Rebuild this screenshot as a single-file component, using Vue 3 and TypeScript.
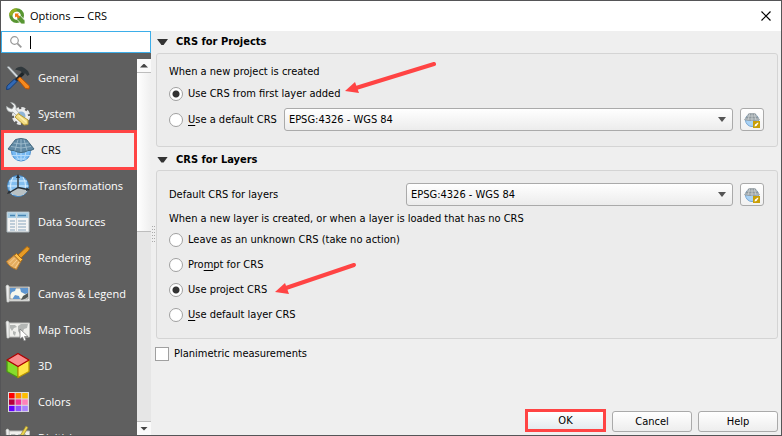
<script setup lang="ts">
import { ref } from 'vue'

interface Section {
  id: string
  label: string
}

interface Choice {
  value: string
  before: string
  key: string
  after: string
}

const sections: Section[] = [
  { id: 'general', label: 'General' },
  { id: 'system', label: 'System' },
  { id: 'crs', label: 'CRS' },
  { id: 'transformations', label: 'Transformations' },
  { id: 'sources', label: 'Data Sources' },
  { id: 'rendering', label: 'Rendering' },
  { id: 'canvas', label: 'Canvas & Legend' },
  { id: 'maptools', label: 'Map Tools' },
  { id: '3d', label: '3D' },
  { id: 'colors', label: 'Colors' },
  { id: 'digitizing', label: 'Digitizing' },
]

const layerChoices: Choice[] = [
  { value: 'unknown', before: 'Leave as an unknown CRS (take no action)', key: '', after: '' },
  { value: 'prompt', before: 'Pro', key: 'm', after: 'pt for CRS' },
  { value: 'project', before: 'Use project CRS', key: '', after: '' },
  { value: 'default', before: '', key: 'U', after: 'se default layer CRS' },
]

const swatches: string[] = [
  '#ff0000', '#ff8c00', '#ffbe00',
  '#b4003c', '#f03296', '#ff82b9',
  '#6400ff', '#8c50ff', '#aa82ff',
]

const active = ref('crs')
const search = ref('')
const projectChoice = ref('first')
const layerChoice = ref('project')
const planimetric = ref(false)
const projectCrs = ref('EPSG:4326 - WGS 84')
const layerCrs = ref('EPSG:4326 - WGS 84')
</script>

<template>
  <div class="window">
    <header class="titlebar">
      <svg class="logo" viewBox="0 0 16 16" aria-hidden="true">
        <circle cx="7.6" cy="7.6" r="5.8" fill="none" stroke="#589632" stroke-width="3.2" />
        <path d="M7.6 1.8A5.8 5.8 0 0 0 1.8 7.6" fill="none" stroke="#93b023" stroke-width="3.2" />
        <path d="M8 7.6h3.4L16 12.6V16h-3.6L8 11.400z" fill="#589632" stroke="#fff" stroke-width=".8" />
        <path d="M6 5.400h4L9 6.800l2 2.200-1.600 1.600L7.200 8.400 6 9.600z" fill="#ee7913" />
      </svg>
      <h1>Options — CRS</h1>
      <button class="close" type="button" aria-label="Close">
        <svg viewBox="0 0 10 10"><path d="M.5.5l9 9M9.500.5l-9 9" stroke="#000" stroke-width="1.200" /></svg>
      </button>
    </header>

    <div class="body">
      <aside class="sidebar">
        <label class="search">
          <svg viewBox="0 0 12 12" aria-hidden="true">
            <circle cx="4.500" cy="4.500" r="3.800" fill="none" stroke="#999" stroke-width="1.200" />
            <path d="M7.300 7.300l4 4" stroke="#999" stroke-width="1.800" />
          </svg>
          <span class="caret"></span>
          <input v-model="search" type="text" aria-label="Search options" />
        </label>
        <div class="listwrap">
          <nav class="list">
            <button
              v-for="s in sections"
              :key="s.id"
              type="button"
              class="item"
              :class="{ active: active === s.id }"
              @click="active = s.id"
            >
              <svg class="icon" viewBox="0 0 24 24" aria-hidden="true">
                <g v-if="s.id === 'general'">
                  <path d="M1 1l2-.5L13 11l-1.500 1.500z" fill="#d8dde0" stroke="#8d979c" stroke-width=".6" />
                  <path d="M9 3.500C12 0 16 0 19 2.500l3 2.500 1.500 3.500-2 1.500-2-2.500-2 .5-3-3z" fill="#30383c" />
                  <path d="M16 6l2.500 2.500L9 17l-2-2z" fill="#1d2529" />
                  <path d="M8.500 13l2.500 2.500L3.500 23 .5 23.500 1 20z" fill="#3269b5" stroke="#143d77" />
                  <path d="M14 11l9.500 9-.5 3-3.500-.5L11.500 13z" fill="#f58a1f" stroke="#bb5100" />
                </g>
                <g v-else-if="s.id === 'system'">
                  <circle cx="15" cy="14" r="7.600" fill="none" stroke="#e5e7e7" stroke-width="3" stroke-dasharray="3.800 2.180" />
                  <circle cx="15" cy="14" r="5.800" fill="#8eb4d6" stroke="#eee" stroke-width="2.600" />
                  <path d="M4.500.5L8 4 6 7 2 5.500.5 4C0 8 3 11 7 10l4 4 2.500-2.500L10 7.500C11 3 8 .5 4.500.5z" fill="#f0f2f2" stroke="#939999" stroke-width=".7" />
                  <path d="M12 11.500l10 6.500v4.500l-4 .5-9-8z" fill="#f1dc83" stroke="#b89b36" />
                  <path d="M12.500 13.500l8 7" stroke="#fff0a8" stroke-width="1.500" />
                </g>
                <g v-else-if="s.id === 'crs'">
                  <circle cx="12" cy="13.500" r="9.500" fill="#77b9f2" stroke="#4a8fd0" />
                  <path d="M3 17.500h18M6.500 21h11M12 12v11M7 12q0 7 3 10M17 12q0 7-3 10" fill="none" stroke="#b5dbfb" />
                  <path d="M6.500 1.500Q12-.5 17.500 1.500L25 11q-3 2-6 1.500-3 2-7 2t-7-2Q2 13-1 11z" fill="#5f88a3" stroke="#44697f" />
                  <path d="M4.500 5q7.500 2 15 0M2 8.500q10 3 20 0M9 1.500L6 12.500M12 1V14M15 1.500l3 11" fill="none" stroke="#a5c1d2" stroke-width=".8" />
                </g>
                <g v-else-if="s.id === 'transformations'">
                  <circle cx="12" cy="12" r="10.500" fill="#83bff0" stroke="#4383bd" />
                  <path d="M3 7h18M1.500 12h21M4 17h17M12 2v20M7 3q-5 9 0 18M17 3q5 9 0 18" fill="none" stroke="#dcf0ff" />
                  <path d="M4 19l8-5 10 2q-4 6-10 6z" fill="#b9c1c3" />
                  <path d="M12 3v10.500L3.500 18.500M12 13.500l9.500 2" fill="none" stroke="#292f34" stroke-width="1.400" />
                  <path d="M12 0l2 4h-4zM1 20l2-4 2 3zM24 16l-4 1 .5-3.500z" fill="#293037" />
                </g>
                <g v-else-if="s.id === 'sources'">
                  <path d="M1 2h22v20H1z" fill="#f4f4f4" stroke="#a9b5bb" />
                  <path d="M1.500 2.500h21V8h-21z" fill="#a9cee5" />
                  <path d="M4 5.500h5M12 5.500h8" stroke="#4886b4" stroke-width="1.400" />
                  <path d="M4 11h5M12 11h8M4 14h5M12 14h8M4 17h5M12 17h8M4 20h5M12 20h8" stroke="#87a5bd" />
                  <path d="M10.500 3v19" stroke="#d1d8db" />
                </g>
                <g v-else-if="s.id === 'rendering'">
                  <path d="M21 .5l2.500 1.500-.5 2-8 8-3-3z" fill="#e69b26" stroke="#a96912" />
                  <path d="M10.500 7.500l6 6-2 2.500-6.500-6.500z" fill="#ffbe49" stroke="#a96912" />
                  <path d="M8 9.500l6.500 6.500-4 7.500Q3 21 .5 15.500z" fill="#e5ad60" stroke="#b87928" />
                  <path d="M8.500 12l-5 5M11 14l-5.500 6M13 16l-4 6" stroke="#f9d093" />
                </g>
                <g v-else-if="s.id === 'canvas' || s.id === 'maptools' || s.id === 'digitizing'">
                  <path d="M3 5h20.500v14H3z" fill="#f0f0ed" stroke="#b9bab8" />
                  <path d="M0 4q1-2 3 0v16H1z" fill="#eee" stroke="#bfc1bf" stroke-width=".7" />
                  <g v-if="s.id === 'canvas'">
                    <path d="M4 6h18v11H4z" fill="#f7f7ed" stroke="#777" stroke-width=".7" />
                    <path d="M4 6h6l-1 3-3 1-2 3zM7 16l2-3 4 1 1 3H7zM14 6h8v5l-3 1-4-2z" fill="#5f96cf" />
                    <path d="M15 18l2-4 5-3v4q-2 2-7 3z" fill="#535956" />
                  </g>
                  <g v-else-if="s.id === 'maptools'">
                    <path d="M4 7h5l2 2-3 1-2 3-2-3zM7 13l3 1-1 4-2-2zM12 8l3-2h7l-1 4-3 1-1 3-2-1-1 3-2-3z" fill="#b3b6b4" />
                    <path d="M14 11v10l2.500-2 1.500 4 2-1-1.500-3.500H22z" fill="#fff" stroke="#737373" stroke-width=".7" />
                  </g>
                  <g v-else>
                    <path d="M5 8h4l2 3-3 2-3-2zM12 8h8v4h-6z" fill="#babcba" />
                    <path d="M20 0l2 1.500-8 14-3 2 .5-3.500z" fill="#ead34f" stroke="#9b8732" stroke-width=".7" />
                  </g>
                </g>
                <g v-else-if="s.id === '3d'" stroke-linejoin="round">
                  <path d="M1 6l11 6v11.500L1 17.500z" fill="#86dd2c" stroke="#4a9913" stroke-width="1.300" />
                  <path d="M23 6l-11 6v11.500l11-6z" fill="#ffe348" stroke="#b99700" stroke-width="1.300" />
                  <path d="M12-.5L23 6l-11 6.500L1 6z" fill="#fa8c8c" stroke="#ad0000" stroke-width="1.300" />
                </g>
                <g v-else>
                  <path d="M2 2h21v20H2z" fill="#ddd" />
                  <rect
                    v-for="(c, i) in swatches"
                    :key="c"
                    :x="3 + (i % 3) * 6.6"
                    :y="3 + Math.floor(i / 3) * 6.4"
                    width="5.600"
                    height="5.400"
                    :fill="c"
                  />
                </g>
              </svg>
              <span>{{ s.label }}</span>
            </button>
          </nav>
          <div class="scrollbar" aria-hidden="true">
            <i class="step"><i class="tri up"></i></i>
            <i class="thumb"></i>
            <i class="track"></i>
            <i class="step"><i class="tri"></i></i>
          </div>
        </div>
        <i class="grip"></i>
      </aside>

      <main class="content">
        <h2><i class="fold"></i>CRS for Projects</h2>
        <section class="group">
          <p>When a new project is created</p>
          <label class="choice">
            <input v-model="projectChoice" type="radio" name="project" value="first" />
            <span>Use CRS from first layer added</span>
          </label>
          <div class="row">
            <label class="choice">
              <input v-model="projectChoice" type="radio" name="project" value="default" />
              <span><u>U</u>se a default CRS</span>
            </label>
            <div class="combo">
              <select v-model="projectCrs" aria-label="Default CRS for projects">
                <option>EPSG:4326 - WGS 84</option>
              </select>
            </div>
            <button class="pick" type="button" aria-label="Select project CRS">
              <svg viewBox="0 0 16 16">
                <circle cx="8" cy="8" r="6.500" fill="#a9d2f5" stroke="#74a5d3" />
                <path d="M5 1h6l5 7q-8 2-16 0z" fill="#8e989d" />
                <path d="M3 4h10M1 7h14M6 1L4 8M8 1v8M10 1l2 7" stroke="#d5dadc" stroke-width=".7" />
                <path d="M9 9h7v7H9z" fill="#c99f08" />
                <path d="M10.500 14.500l.5-2 3-2 .5.5-2 3z" fill="#fff" />
              </svg>
            </button>
          </div>
        </section>

        <h2 class="next"><i class="fold"></i>CRS for Layers</h2>
        <section class="group layers">
          <div class="row">
            <label class="name" for="layer-crs">Default CRS for layers</label>
            <div class="combo">
              <select id="layer-crs" v-model="layerCrs">
                <option>EPSG:4326 - WGS 84</option>
              </select>
            </div>
            <button class="pick" type="button" aria-label="Select layer CRS">
              <svg viewBox="0 0 16 16">
                <circle cx="8" cy="8" r="6.500" fill="#a9d2f5" stroke="#74a5d3" />
                <path d="M5 1h6l5 7q-8 2-16 0z" fill="#8e989d" />
                <path d="M3 4h10M1 7h14M6 1L4 8M8 1v8M10 1l2 7" stroke="#d5dadc" stroke-width=".7" />
                <path d="M9 9h7v7H9z" fill="#c99f08" />
                <path d="M10.500 14.500l.5-2 3-2 .5.5-2 3z" fill="#fff" />
              </svg>
            </button>
          </div>
          <p>When a new layer is created, or when a layer is loaded that has no CRS</p>
          <div class="choices">
            <label v-for="c in layerChoices" :key="c.value" class="choice">
              <input v-model="layerChoice" type="radio" name="layer" :value="c.value" />
              <span>{{ c.before }}<u v-if="c.key">{{ c.key }}</u>{{ c.after }}</span>
            </label>
          </div>
        </section>

        <label class="check">
          <input v-model="planimetric" type="checkbox" />
          <span>Planimetric measurements</span>
        </label>

        <footer class="actions">
          <button class="ok" type="button">OK</button>
          <button type="button">Cancel</button>
          <button type="button">Help</button>
        </footer>
      </main>
    </div>

    <svg class="arrow first" viewBox="0 0 92 36" aria-hidden="true">
      <path d="M90 4L12 28" stroke="#ff4444" stroke-width="4" stroke-linecap="round" />
      <path d="M1 31l10-9 4 11z" fill="#ff4444" />
    </svg>
    <svg class="arrow second" viewBox="0 0 92 36" aria-hidden="true">
      <path d="M80 4L12 27" stroke="#ff4444" stroke-width="4" stroke-linecap="round" />
      <path d="M1 31l10-9 4 11z" fill="#ff4444" />
    </svg>
  </div>
</template>

<style>
body {
  margin: 0;
  background: #4a4a4c;
}
</style>

<style scoped>
.window {
  position: relative;
  display: flex;
  flex-direction: column;
  box-sizing: border-box;
  height: 100vh;
  border: 1px solid #555557;
  background: #efefef;
  color: #000;
  font: 11px/16px "DejaVu Sans Condensed", "Noto Sans", sans-serif;
  overflow: hidden;
}
button,
input,
select {
  margin: 0;
  padding: 0;
  font: inherit;
  color: inherit;
}
.titlebar {
  display: flex;
  flex: none;
  align-items: center;
  height: 30px;
  padding: 0 8px;
  background: #fff;
}
.logo {
  width: 16px;
  height: 16px;
}
h1 {
  flex: 1;
  margin: 0 0 0 5px;
  font: 11px/16px "Open Sans", sans-serif;
}
.close {
  display: grid;
  place-items: center;
  width: 14px;
  height: 20px;
  border: 0;
  background: none;
}
.close svg {
  width: 10px;
  height: 10px;
}
.body {
  display: flex;
  flex: 1;
  min-height: 0;
}
.sidebar {
  position: relative;
  display: flex;
  flex: none;
  flex-direction: column;
  width: 150px;
}
.search {
  display: flex;
  flex: none;
  align-items: center;
  box-sizing: border-box;
  height: 22px;
  padding: 0 8px;
  border: 1px solid #3daee9;
  background: #fff;
}
.search svg {
  width: 12px;
  height: 12px;
}
.caret {
  width: 1px;
  height: 13px;
  margin-left: 8px;
  background: #000;
}
.search input {
  flex: 1;
  min-width: 0;
  border: 0;
  outline: 0;
  background: none;
}
.listwrap {
  display: flex;
  flex: 1;
  min-height: 0;
  padding-top: 6px;
  background: #5f5f5f;
}
.list {
  flex: 1;
  min-width: 0;
  padding-top: 1px;
  overflow: hidden;
}
.item {
  display: flex;
  align-items: center;
  gap: 8px;
  box-sizing: border-box;
  width: 100%;
  height: 36px;
  padding: 0 0 0 5px;
  border: 0;
  background: none;
  color: #fff;
  font: 11px/16px "Open Sans", sans-serif;
  text-align: left;
  white-space: nowrap;
}
.item.active {
  position: relative;
  height: 40px;
  margin: -2px 0;
  border: 3px solid #ff4444;
  background: #efefef;
  color: #000;
}
.icon {
  flex: none;
  width: 24px;
  height: 24px;
  overflow: visible;
}
.scrollbar {
  display: flex;
  flex: none;
  flex-direction: column;
  width: 14px;
  background: #e6e6e6;
}
.step {
  display: grid;
  flex: none;
  place-items: center;
  height: 13px;
  background: #fafafa;
}
.thumb {
  flex: 158;
  border: solid #bdbdbd;
  border-width: 1px 0;
  background: linear-gradient(90deg, #fff, #efefef);
}
.track {
  flex: 190;
  border-bottom: 1px solid #bdbdbd;
}
.tri {
  width: 8px;
  height: 4px;
  background: #444;
  clip-path: polygon(0 0, 100% 0, 50% 100%);
}
.tri.up {
  clip-path: polygon(50% 0, 100% 100%, 0 100%);
}
.grip {
  position: absolute;
  left: 151px;
  top: 195px;
  width: 3px;
  height: 17px;
  background: repeating-linear-gradient(#aaa 0 1px, transparent 1px 3px);
  clip-path: polygon(0 0, 33% 0, 33% 100%, 66% 100%, 66% 0, 100% 0, 100% 100%, 0 100%);
}
.content {
  display: flex;
  flex: 1;
  flex-direction: column;
  min-width: 0;
  padding: 0 3px 3px 5px;
}
h2 {
  display: flex;
  align-items: center;
  gap: 8px;
  height: 22px;
  margin: 0;
  font-size: 11px;
  line-height: 16px;
}
.next {
  height: 21px;
  padding-top: 2px;
}
.fold {
  width: 11px;
  height: 6px;
  margin-left: 1px;
  background: #333;
  clip-path: polygon(0 0, 100% 0, 60% 100%, 40% 100%);
}
.group {
  display: flex;
  flex-direction: column;
  gap: 6px;
  padding: 10px 13px 15px 12px;
  border: 1px solid #d4d4d4;
  border-radius: 3px;
  background: #ececec;
}
.layers {
  gap: 5px;
  padding-top: 12px;
}
p {
  margin: 0;
}
.row {
  display: flex;
  align-items: center;
  gap: 7px;
}
.choices {
  display: flex;
  flex-direction: column;
  gap: 9px;
}
.choice,
.check {
  display: flex;
  align-items: center;
  gap: 5px;
  white-space: nowrap;
}
input[type="radio"],
input[type="checkbox"] {
  flex: none;
  box-sizing: border-box;
  width: 14px;
  height: 14px;
  appearance: none;
  border: 1px solid #a0a0a0;
  background: #fff;
}
input[type="radio"] {
  border-radius: 50%;
}
input[type="radio"]:checked {
  background: radial-gradient(circle, #333 0 3px, #fff 4px);
}
input[type="checkbox"]:checked {
  background: #3daee9;
}
u {
  text-underline-offset: 2px;
}
.combo {
  position: relative;
  flex: 1;
  min-width: 0;
}
.name {
  width: 230px;
}
.combo::after {
  content: "";
  position: absolute;
  right: 7px;
  top: 9px;
  width: 8px;
  height: 5px;
  background: #555;
  clip-path: polygon(0 0, 100% 0, 50% 100%);
  pointer-events: none;
}
select {
  display: block;
  box-sizing: border-box;
  width: 100%;
  height: 23px;
  padding: 0 20px 0 4px;
  appearance: none;
  border: 1px solid #aaa;
  border-radius: 3px;
  background: linear-gradient(#fff, #ececec);
}
.pick {
  display: grid;
  flex: none;
  box-sizing: border-box;
  place-items: center;
  width: 24px;
  height: 23px;
  border: 1px solid #aaa;
  border-radius: 3px;
  background: linear-gradient(#fff, #f1f1f1);
}
.pick svg {
  width: 16px;
  height: 16px;
}
.check {
  margin: 7px 0 0 -1px;
}
.actions {
  display: flex;
  justify-content: flex-end;
  gap: 6px;
  margin-top: auto;
}
.actions button {
  box-sizing: border-box;
  width: 80px;
  height: 21px;
  border: 1px solid #aaa;
  border-radius: 3px;
  background: linear-gradient(#fff, #ededed);
  line-height: 16px;
}
.actions .ok {
  width: 81px;
  height: 23px;
  margin: -2px 0 0;
  border: 3px solid #ff4444;
  border-radius: 0;
  background: linear-gradient(#fff, #e3ebf0);
}
.arrow {
  position: absolute;
  width: 92px;
  height: 36px;
  fill: none;
  pointer-events: none;
}
.first {
  left: 343px;
  top: 59px;
}
.second {
  left: 273px;
  top: 260px;
}
</style>
